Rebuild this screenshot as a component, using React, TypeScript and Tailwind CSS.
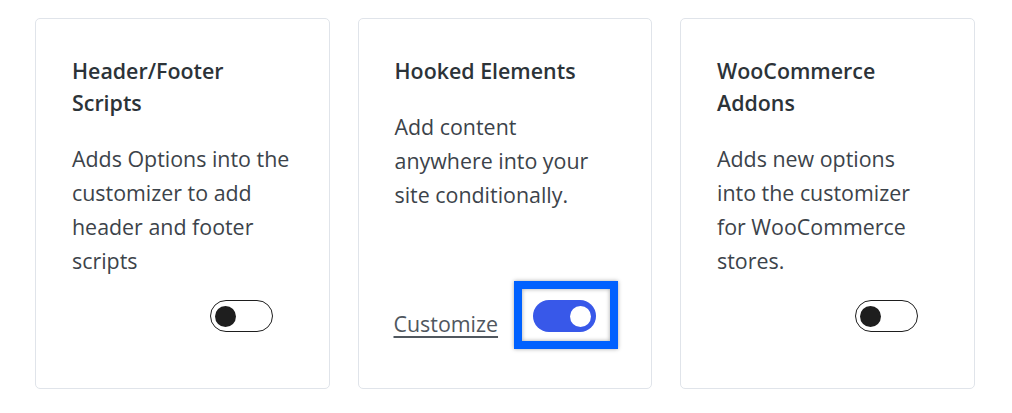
import type { ReactNode } from "react";

type Addon = {
  title: string[];
  description: string[];
  enabled: boolean;
  customize?: boolean;
};

const addons: Addon[] = [
  {
    title: ["Header/Footer", "Scripts"],
    description: ["Adds Options into the", "customizer to add", "header and footer", "scripts"],
    enabled: false,
  },
  {
    title: ["Hooked Elements"],
    description: ["Add content", "anywhere into your", "site conditionally."],
    enabled: true,
    customize: true,
  },
  {
    title: ["WooCommerce", "Addons"],
    description: ["Adds new options", "into the customizer", "for WooCommerce", "stores."],
    enabled: false,
  },
];

function Toggle({ on }: { on: boolean }) {
  if (on) {
    return (
      <span className="flex h-[32px] w-[63px] items-center justify-end rounded-full bg-[#3858e9] px-[5px]">
        <span className="size-[21px] rounded-full bg-white" />
      </span>
    );
  }
  return (
    <span className="flex h-[32px] w-[63px] items-center rounded-full border border-[#1e1e1e] bg-white px-[4px]">
      <span className="size-[21px] rounded-full bg-[#1e1e1e]" />
    </span>
  );
}

function Highlight({ children }: { children: ReactNode }) {
  return (
    <span className="relative block">
      <span className="pointer-events-none absolute -top-[19px] -right-[22px] -bottom-[17px] -left-[19px] border-[8px] border-[#0061ff] shadow-[0_0_4px_rgba(0,0,0,0.35),inset_0_0_4px_rgba(0,0,0,0.35)]" />
      {children}
    </span>
  );
}

function AddonCard({ addon }: { addon: Addon }) {
  return (
    <div className="flex h-[371px] w-[294.5px] flex-col rounded-[5px] border border-[#e0e4ea] bg-white pt-[36px] pr-[24px] pl-[36px]">
      <h3 className="text-[21.4px] leading-[32px] font-semibold text-[#2c3338]">
        {addon.title.map((l) => (
          <span key={l} className="block whitespace-nowrap">{l}</span>
        ))}
      </h3>
      <p className="mt-[23px] text-[21.4px] leading-[34px] text-[#3c434a]">
        {addon.description.map((l) => (
          <span key={l} className="block whitespace-nowrap">{l}</span>
        ))}
      </p>
      <div className="mt-auto mb-[56px] flex items-end">
        <div className="w-[138px]">
          {addon.customize && (
            <a
              href="#"
              className="relative -left-[1px] top-[6px] text-[21.4px] leading-[24px] text-[#50575e] underline decoration-2 underline-offset-[4px]"
            >
              Customize
            </a>
          )}
        </div>
        {addon.customize ? (
          <Highlight>
            <Toggle on={addon.enabled} />
          </Highlight>
        ) : (
          <Toggle on={addon.enabled} />
        )}
      </div>
    </div>
  );
}

export default function App() {
  return (
    <div
      className="flex min-h-[413px] gap-[28px] bg-white pt-[18px] pl-[35px]"
      style={{ fontFamily: '"Open Sans", "Noto Sans", sans-serif' }}
    >
      {addons.map((a) => (
        <AddonCard key={a.title.join(" ")} addon={a} />
      ))}
    </div>
  );
}
